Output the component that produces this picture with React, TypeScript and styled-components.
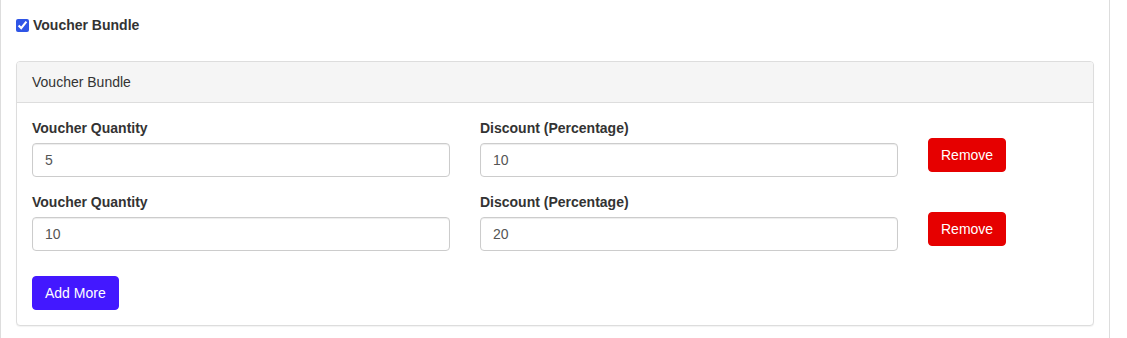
import React from "react";
import styled, { createGlobalStyle } from "styled-components";

const Global = createGlobalStyle`
  html, body { margin: 0; padding: 0; background: #fff; }
  body {
    font-family: "Liberation Sans", Arial, Helvetica, sans-serif;
    font-size: 14px;
    line-height: 20px;
    color: #333;
  }
  * { box-sizing: border-box; }
`;

const Page = styled.div`
  width: 1110px;
  min-height: 338px;
  border-left: 1px solid #ddd;
  border-right: 1px solid #ddd;
  padding: 15px 15px 0 15px;
`;

const CheckLabel = styled.label`
  display: flex;
  align-items: center;
  font-weight: bold;
  height: 20px;
  margin-bottom: 26px;
`;

const Check = styled.input`
  width: 13px;
  height: 13px;
  margin: 0 4px 0 0;
  accent-color: #2f55e6;
`;

const Card = styled.div`
  border: 1px solid #ddd;
  border-radius: 4px;
  box-shadow: 0 1px 1px rgba(0, 0, 0, 0.05);
  background: #fff;
`;

const CardHeader = styled.div`
  background: #f5f5f5;
  border-bottom: 1px solid #ddd;
  padding: 10px 15px;
  border-radius: 3px 3px 0 0;
`;

const CardBody = styled.div`
  padding: 15px;
`;

const Row = styled.div`
  display: grid;
  grid-template-columns: 448px 448px 1fr;
  margin: 0 -15px 15px;
`;

const Col = styled.div`
  padding: 0 15px;
`;

const Label = styled.label`
  display: block;
  font-weight: bold;
  margin-bottom: 5px;
`;

const Input = styled.input`
  display: block;
  width: 100%;
  height: 34px;
  padding: 6px 12px;
  font-family: inherit;
  font-size: 14px;
  line-height: 20px;
  color: #555;
  background: #fff;
  border: 1px solid #ccc;
  border-radius: 4px;
  box-shadow: inset 0 1px 1px rgba(0, 0, 0, 0.075);
  outline: none;
`;

const Button = styled.button<{ $bg: string }>`
  display: inline-block;
  height: 34px;
  padding: 6px 12px;
  font-family: inherit;
  font-size: 14px;
  line-height: 20px;
  color: #fff;
  background: ${(p) => p.$bg};
  border: 1px solid ${(p) => p.$bg};
  border-radius: 4px;
  cursor: pointer;
`;

const RemoveButton = styled(Button)`
  margin-top: 20px;
`;

const AddButton = styled(Button)`
  margin-top: 10px;
`;

const rows = [
  { qty: "5", discount: "10" },
  { qty: "10", discount: "20" },
];

export default function App() {
  return (
    <>
      <Global />
      <Page>
        <CheckLabel>
          <Check type="checkbox" defaultChecked />
          Voucher Bundle
        </CheckLabel>
        <Card>
          <CardHeader>Voucher Bundle</CardHeader>
          <CardBody>
            {rows.map((r, i) => (
              <Row key={i}>
                <Col>
                  <Label>Voucher Quantity</Label>
                  <Input defaultValue={r.qty} />
                </Col>
                <Col>
                  <Label>Discount (Percentage)</Label>
                  <Input defaultValue={r.discount} />
                </Col>
                <Col>
                  <RemoveButton $bg="#e60000">Remove</RemoveButton>
                </Col>
              </Row>
            ))}
            <AddButton $bg="#4318ff">Add More</AddButton>
          </CardBody>
        </Card>
      </Page>
    </>
  );
}
